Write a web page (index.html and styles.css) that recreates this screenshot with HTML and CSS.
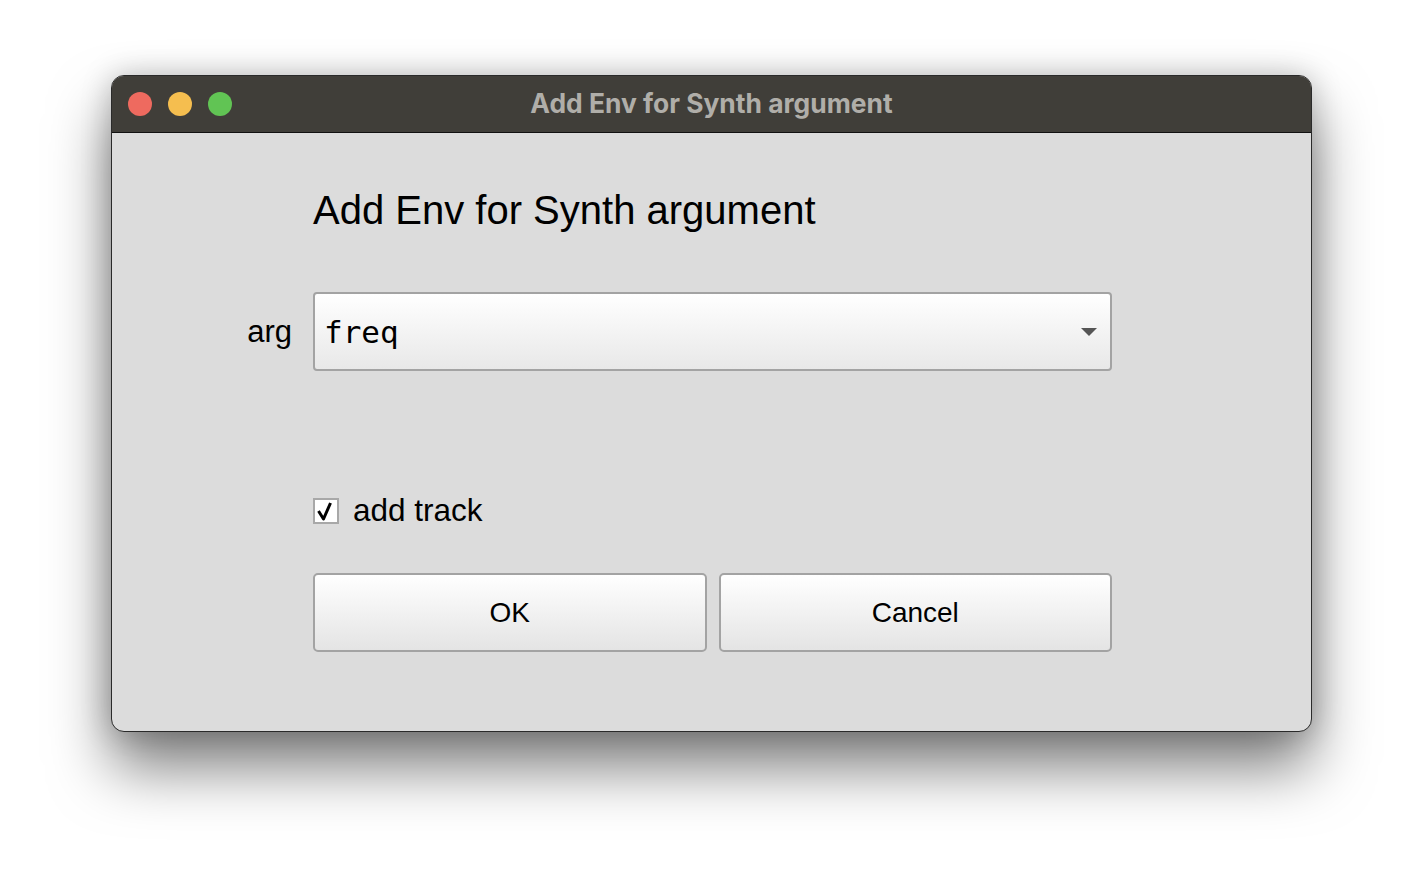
FILE: index.html
```html
<!DOCTYPE html>
<html>
<head>
<meta charset="utf-8">
<link rel="stylesheet" href="styles.css">
</head>
<body>
<div class="window">
  <div class="titlebar">
    <div class="lights">
      <span class="light red"></span>
      <span class="light yellow"></span>
      <span class="light green"></span>
    </div>
    <div class="title">Add Env for Synth argument</div>
  </div>
  <div class="content">
    <div class="heading">Add Env for Synth argument</div>
    <div class="row">
      <label class="label">arg</label>
      <div class="combo">
        <span class="combo-text">freq</span>
        <svg class="arrow" width="16" height="8" viewBox="0 0 16 8"><polygon points="0,0 16,0 8,8" fill="#555"/></svg>
      </div>
    </div>
    <div class="check-row">
      <span class="checkbox">
        <svg class="check" width="22" height="22" viewBox="0 0 22 22"><path d="M3.5 11 L8.5 19 L15.5 3" fill="none" stroke="#000" stroke-width="3" stroke-linejoin="round"/></svg>
      </span>
      <span class="check-label">add track</span>
    </div>
    <div class="buttons">
      <button class="btn">OK</button>
      <button class="btn">Cancel</button>
    </div>
  </div>
</div>
</body>
</html>
```
FILE: styles.css
```css
html, body {
  margin: 0;
  padding: 0;
  background: #ffffff;
  width: 1424px;
  height: 880px;
  overflow: hidden;
}
body {
  padding-top: 75px;
  padding-left: 111px;
  box-sizing: border-box;
  font-family: "Liberation Sans", Arial, sans-serif;
}
.window {
  width: 1201px;
  height: 657px;
  box-sizing: border-box;
  border: 1px solid #2a2a2a;
  border-radius: 13px;
  overflow: hidden;
  background: #dcdcdc;
  box-shadow: 0 36px 60px rgba(0,0,0,0.5), 0 0 30px rgba(0,0,0,0.22);
  display: flex;
  flex-direction: column;
}
.titlebar {
  height: 57px;
  flex: none;
  background: #403e39;
  border-bottom: 1px solid #111;
  box-sizing: border-box;
  display: flex;
  align-items: center;
  position: relative;
}
.lights {
  display: flex;
  gap: 16px;
  padding-left: 16px;
}
.light {
  width: 24px;
  height: 24px;
  border-radius: 50%;
  display: block;
}
.red { background: #ee6a5f; }
.yellow { background: #f5be4f; }
.green { background: #61c454; }
.title {
  position: absolute;
  left: 0;
  right: 0;
  text-align: center;
  font-family: Inter, Roboto, sans-serif;
  font-weight: 700;
  font-size: 26.4px;
  color: #b0aea9;
  top: 11px;
}
.content {
  padding-left: 201px;
  padding-top: 50px;
  display: flex;
  flex-direction: column;
  width: 799px;
}
.heading {
  font-size: 40px;
  line-height: 54px;
  color: #000;
}
.row {
  display: flex;
  align-items: center;
  margin-top: 55px;
  position: relative;
}
.label {
  position: absolute;
  right: 100%;
  margin-right: 21px;
  font-size: 31px;
  color: #000;
}
.combo {
  flex: 1;
  height: 79px;
  box-sizing: border-box;
  border: 2px solid #a3a3a3;
  border-radius: 4px;
  background: linear-gradient(#ffffff, #e8e8e8);
  display: flex;
  align-items: center;
  padding-left: 9px;
  padding-right: 13px;
}
.combo-text {
  flex: 1;
  font-family: "DejaVu Sans Mono", monospace;
  font-size: 31px;
  color: #000;
}
.arrow { display: block; }
.check-row {
  display: flex;
  align-items: center;
  margin-top: 121px;
  gap: 14px;
}
.checkbox {
  width: 26px;
  height: 26px;
  box-sizing: border-box;
  border: 2px solid #a8a8a8;
  background: #fff;
  display: flex;
  align-items: center;
  justify-content: center;
}
.check { display: block; flex: none; }
.check-label {
  font-size: 31.5px;
  color: #000;
}
.buttons {
  display: flex;
  gap: 12px;
  margin-top: 44px;
}
.btn {
  flex: 1;
  height: 79px;
  box-sizing: border-box;
  border: 2px solid #a3a3a3;
  border-radius: 5px;
  background: linear-gradient(#ffffff, #e4e4e4);
  font-family: "Liberation Sans", Arial, sans-serif;
  font-size: 28px;
  color: #000;
  padding: 0;
}
```
